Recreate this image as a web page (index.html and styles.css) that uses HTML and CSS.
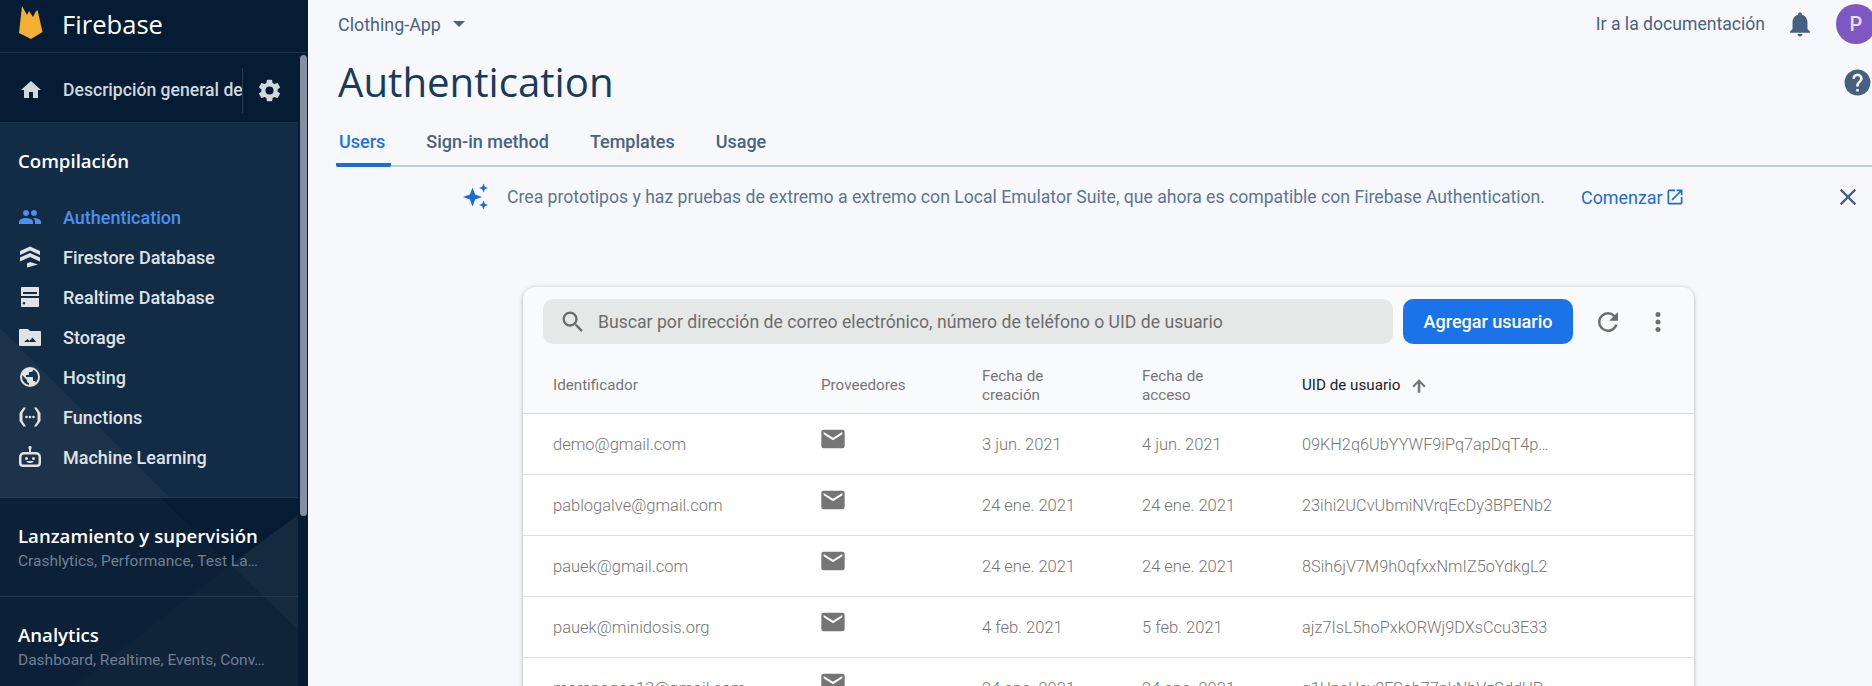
FILE: index.html
```html
<!doctype html>
<html lang="es">
<head>
<meta charset="utf-8">
<title>Authentication - Firebase</title>
<link rel="stylesheet" href="styles.css">
</head>
<body>
<div class="app">
	<aside class="nav">
		<svg class="nav-bg" width="308" height="686" viewBox="0 0 308 686">
			<rect x="0" y="123" width="298" height="374" fill="#132c45"/>
			<polygon points="0,328 169,497 0,497" fill="#1c3349"/>
			<rect x="0" y="497" width="298" height="189" fill="#0c2137"/>
			<polygon points="160,497 298,497 298,515 230,565" fill="#051c34"/>
			<polygon points="298,515 230,565 298,630" fill="#15293f"/>
			<polygon points="230,565 75,686 298,686 298,630" fill="#0f2439"/>
		</svg>
		<div class="brand">
			<svg class="brand-logo" width="24" height="34" viewBox="0 0 24 34"><path d="M0 27 L3 0 L8 9 L10 5 L14 11 L16.500 6 L18.500 4 L23.500 26 L12 33 Z" fill="#f3ae33"/></svg>
			<span class="brand-name">Firebase</span>
		</div>
		<div class="overview">
			<svg class="ico" viewBox="0 0 24 24"><path d="M10 20v-6h4v6h5v-8h3L12 3 2 12h3v8z"/></svg>
			<span class="overview-text">Descripción general de</span>
			<svg class="ico gear" viewBox="0 0 24 24"><path d="M19.14 12.94c.04-.3.06-.61.06-.94 0-.32-.02-.64-.07-.94l2.03-1.58a.49.49 0 0 0 .12-.61l-1.92-3.32a.49.49 0 0 0-.59-.22l-2.39.96c-.5-.38-1.03-.7-1.62-.94l-.36-2.54a.48.48 0 0 0-.48-.41h-3.84c-.24 0-.43.17-.47.41l-.36 2.54c-.59.24-1.13.57-1.62.94l-2.39-.96a.49.49 0 0 0-.59.22L2.74 8.87c-.12.21-.08.47.12.61l2.03 1.58c-.05.3-.09.63-.09.94s.02.64.07.94l-2.03 1.58a.49.49 0 0 0-.12.61l1.92 3.32c.12.22.37.29.59.22l2.39-.96c.5.38 1.03.7 1.62.94l.36 2.54c.05.24.24.41.48.41h3.84c.24 0 .44-.17.47-.41l.36-2.54c.59-.24 1.13-.56 1.62-.94l2.39.96c.22.08.47 0 .59-.22l1.92-3.32c.12-.22.07-.47-.12-.61l-2.01-1.58zM12 15.6A3.6 3.6 0 1 1 12 8.4a3.6 3.6 0 0 1 0 7.2z"/></svg>
		</div>
		<div class="nav-scroll">
			<section class="nav-group open">
				<h3 class="group-title">Compilación</h3>
				<a class="nav-item on">
					<svg class="ico" viewBox="0 0 24 24"><path d="M16 11c1.66 0 2.99-1.34 2.99-3S17.66 5 16 5c-1.66 0-3 1.34-3 3s1.34 3 3 3zm-8 0c1.66 0 2.99-1.34 2.99-3S9.66 5 8 5C6.34 5 5 6.34 5 8s1.34 3 3 3zm0 2c-2.33 0-7 1.17-7 3.5V19h14v-2.5c0-2.33-4.67-3.5-7-3.5zm8 0c-.29 0-.62.02-.97.05 1.16.84 1.97 1.97 1.97 3.45V19h6v-2.5c0-2.33-4.67-3.5-7-3.5z"/></svg>
					Authentication
				</a>
				<a class="nav-item">
					<svg class="ico" viewBox="0 0 24 24"><path d="M12 1.500 22 6V10L12 5.500 2 10V6zM12 8 22 12.500V16.500L12 12 2 16.500V12.500zM9 22.500V18.500L12 17 20 19.500z"/></svg>
					Firestore Database
				</a>
				<a class="nav-item">
					<svg class="ico" viewBox="0 0 24 24"><path d="M4 2h16a1 1 0 0 1 1 1v8H3V3a1 1 0 0 1 1-1zm1 5v2h14V7zM3 13h18v8a1 1 0 0 1-1 1H4a1 1 0 0 1-1-1zm3 4a1.300 1.300 0 1 0 0 2.600A1.300 1.300 0 0 0 6 17z" fill-rule="evenodd"/></svg>
					Realtime Database
				</a>
				<a class="nav-item">
					<svg class="ico" viewBox="0 0 24 24"><path d="M2 4h8l2 2h10a1 1 0 0 1 1 1v13a1 1 0 0 1-1 1H2a1 1 0 0 1-1-1V5a1 1 0 0 1 1-1zm4 13h12l-3.500-4.500-3 3.500-2-2z" fill-rule="evenodd"/></svg>
					Storage
				</a>
				<a class="nav-item">
					<svg class="ico" viewBox="0 0 24 24"><path d="M12 2a10 10 0 1 0 0 20 10 10 0 0 0 0-20zM4 12c0-.6.1-1.200.2-1.800L9 15v1c0 1.100.9 2 2 2v1.900A8 8 0 0 1 4 12zm13.900 5.400c-.3-.8-1-1.400-1.900-1.400h-1v-3c0-.6-.4-1-1-1H8v-2h2c.6 0 1-.4 1-1V7h2c1.100 0 2-.9 2-2v-.4a8 8 0 0 1 2.900 12.800z" fill-rule="evenodd"/></svg>
					Hosting
				</a>
				<a class="nav-item">
					<svg class="ico" viewBox="0 0 24 24"><path d="M8 2.500H5.500L1.500 8v8l4 5.500H8l-3.500-5.500V8zM16 2.500h2.500L22.500 8v8l-4 5.500H16l3.500-5.500V8z"/><circle cx="8.500" cy="12" r="1.300"/><circle cx="12" cy="12" r="1.300"/><circle cx="15.500" cy="12" r="1.300"/></svg>
					Functions
				</a>
				<a class="nav-item">
					<svg class="ico" viewBox="0 0 24 24"><path fill-rule="evenodd" d="M12 1a1.700 1.700 0 0 0-1 3.100V7H6a5 5 0 0 0-5 5v6a4 4 0 0 0 4 4h14a4 4 0 0 0 4-4v-6a5 5 0 0 0-5-5h-5V4.100A1.700 1.700 0 0 0 12 1zM6 9.500h12a2.500 2.500 0 0 1 2.500 2.500v6a1.500 1.500 0 0 1-1.500 1.500H5A1.500 1.500 0 0 1 3.500 18v-6A2.500 2.500 0 0 1 6 9.500z"/><circle cx="8.500" cy="13.500" r="1.500"/><circle cx="15.500" cy="13.500" r="1.500"/><path d="M8.500 16h7c0 1.200-1.500 2-3.500 2s-3.500-.8-3.500-2z"/></svg>
					Machine Learning
				</a>
			</section>
			<section class="nav-group closed">
				<h3 class="group-title">Lanzamiento y supervisión</h3>
				<p class="group-sub">Crashlytics, Performance, Test La…</p>
			</section>
			<section class="nav-group closed">
				<h3 class="group-title">Analytics</h3>
				<p class="group-sub">Dashboard, Realtime, Events, Conv…</p>
			</section>
			<div class="scrollbar"></div>
		</div>
	</aside>

	<main class="main">
		<header class="topbar">
			<div class="project">Clothing-App <span class="caret"></span></div>
			<div class="top-right">
				<a class="docs">Ir a la documentación</a>
				<svg class="bell" viewBox="0 0 24 24"><path d="M12 22c1.100 0 2-.9 2-2h-4c0 1.100.9 2 2 2zm6-6v-5c0-3.070-1.630-5.640-4.500-6.320V4a1.500 1.500 0 0 0-3 0v.68C7.640 5.360 6 7.920 6 11v5l-2 2v1h16v-1z"/></svg>
				<span class="avatar">P</span>
			</div>
		</header>
		<div class="title-row">
			<h1 class="title">Authentication</h1>
			<svg class="help" viewBox="0 0 24 24"><path d="M12 2a10 10 0 1 0 0 20 10 10 0 0 0 0-20zm1 17h-2v-2h2zm2.070-7.750-.9.920C13.450 12.900 13 13.500 13 15h-2v-.5c0-1.100.45-2.100 1.170-2.830l1.240-1.260A2 2 0 1 0 10 9H8a4 4 0 1 1 8 0c0 .88-.36 1.680-.93 2.250z"/></svg>
		</div>
		<nav class="tabs">
			<a class="tab on">Users</a>
			<a class="tab">Sign-in method</a>
			<a class="tab">Templates</a>
			<a class="tab">Usage</a>
		</nav>
		<div class="promo">
			<svg class="sparkle" width="28" height="28" viewBox="0 0 28 28"><path d="M10.500 4.500l2.600 6.900 6.900 2.600-6.900 2.600-2.600 6.900-2.600-6.900L1 14l6.900-2.600zM21.500 0.500l1.300 3.200 3.200 1.300-3.200 1.300-1.300 3.200-1.300-3.200L17 5l3.200-1.300zM21.500 17.500l1.300 3.200 3.200 1.300-3.200 1.300-1.300 3.200-1.300-3.200L17 22l3.200-1.300z"/></svg>
			<span class="promo-text">Crea prototipos y haz pruebas de extremo a extremo con Local Emulator Suite, que ahora es compatible con Firebase Authentication.</span>
			<a class="promo-link">Comenzar
				<svg width="20" height="20" viewBox="0 0 24 24"><path d="M19 19H5V5h7V3H5a2 2 0 0 0-2 2v14a2 2 0 0 0 2 2h14a2 2 0 0 0 2-2v-7h-2zM14 3v2h3.590l-9.830 9.830 1.410 1.410L19 6.410V10h2V3z"/></svg>
			</a>
			<svg class="promo-close" width="28" height="28" viewBox="0 0 24 24"><path d="M19 6.410 17.590 5 12 10.590 6.410 5 5 6.410 10.590 12 5 17.590 6.410 19 12 13.410 17.590 19 19 17.590 13.410 12z"/></svg>
		</div>

		<div class="card">
			<div class="toolbar">
				<div class="search">
					<svg width="28" height="28" viewBox="0 0 24 24"><path d="M15.500 14h-.79l-.28-.27A6.470 6.470 0 0 0 16 9.500 6.500 6.500 0 1 0 9.500 16c1.610 0 3.090-.59 4.230-1.570l.27.28v.79l5 4.990L20.490 19zm-6 0a4.500 4.500 0 1 1 0-9 4.500 4.500 0 0 1 0 9z"/></svg>
					<span>Buscar por dirección de correo electrónico, número de teléfono o UID de usuario</span>
				</div>
				<a class="btn">Agregar usuario</a>
				<svg class="tool" viewBox="0 0 24 24"><path d="M17.650 6.350A7.960 7.960 0 0 0 12 4a8 8 0 1 0 7.730 10h-2.080A6 6 0 1 1 12 6c1.660 0 3.140.69 4.220 1.780L13 11h7V4z"/></svg>
				<svg class="tool" viewBox="0 0 24 24"><path d="M12 8a2 2 0 1 0 0-4 2 2 0 0 0 0 4zm0 2a2 2 0 1 0 0 4 2 2 0 0 0 0-4zm0 6a2 2 0 1 0 0 4 2 2 0 0 0 0-4z"/></svg>
			</div>
			<div class="row head">
				<div class="c1">Identificador</div>
				<div class="c2">Proveedores</div>
				<div class="c3">Fecha de<br>creación</div>
				<div class="c4">Fecha de<br>acceso</div>
				<div class="c5 sorted">UID de usuario
					<svg width="20" height="20" viewBox="0 0 24 24"><path d="M12 4 20 12l-1.800 1.800L13.500 9V20h-3V9L5.800 13.800 4 12z"/></svg>
				</div>
			</div>
			<div class="row">
				<div class="c1">demo@gmail.com</div>
				<div class="c2"><svg class="mail" viewBox="0 0 24 24"><path d="M20 4H4a2 2 0 0 0-2 2v12a2 2 0 0 0 2 2h16a2 2 0 0 0 2-2V6a2 2 0 0 0-2-2zm0 4-8 5-8-5V6l8 5 8-5z"/></svg></div>
				<div class="c3">3 jun. 2021</div>
				<div class="c4">4 jun. 2021</div>
				<div class="c5">09KH2q6UbYYWF9iPq7apDqT4p…</div>
			</div>
			<div class="row">
				<div class="c1">pablogalve@gmail.com</div>
				<div class="c2"><svg class="mail" viewBox="0 0 24 24"><path d="M20 4H4a2 2 0 0 0-2 2v12a2 2 0 0 0 2 2h16a2 2 0 0 0 2-2V6a2 2 0 0 0-2-2zm0 4-8 5-8-5V6l8 5 8-5z"/></svg></div>
				<div class="c3">24 ene. 2021</div>
				<div class="c4">24 ene. 2021</div>
				<div class="c5">23ihi2UCvUbmiNVrqEcDy3BPENb2</div>
			</div>
			<div class="row">
				<div class="c1">pauek@gmail.com</div>
				<div class="c2"><svg class="mail" viewBox="0 0 24 24"><path d="M20 4H4a2 2 0 0 0-2 2v12a2 2 0 0 0 2 2h16a2 2 0 0 0 2-2V6a2 2 0 0 0-2-2zm0 4-8 5-8-5V6l8 5 8-5z"/></svg></div>
				<div class="c3">24 ene. 2021</div>
				<div class="c4">24 ene. 2021</div>
				<div class="c5">8Sih6jV7M9h0qfxxNmIZ5oYdkgL2</div>
			</div>
			<div class="row">
				<div class="c1">pauek@minidosis.org</div>
				<div class="c2"><svg class="mail" viewBox="0 0 24 24"><path d="M20 4H4a2 2 0 0 0-2 2v12a2 2 0 0 0 2 2h16a2 2 0 0 0 2-2V6a2 2 0 0 0-2-2zm0 4-8 5-8-5V6l8 5 8-5z"/></svg></div>
				<div class="c3">4 feb. 2021</div>
				<div class="c4">5 feb. 2021</div>
				<div class="c5">ajz7IsL5hoPxkORWj9DXsCcu3E33</div>
			</div>
			<div class="row">
				<div class="c1">morenogos13@gmail.com</div>
				<div class="c2"><svg class="mail" viewBox="0 0 24 24"><path d="M20 4H4a2 2 0 0 0-2 2v12a2 2 0 0 0 2 2h16a2 2 0 0 0 2-2V6a2 2 0 0 0-2-2zm0 4-8 5-8-5V6l8 5 8-5z"/></svg></div>
				<div class="c3">24 ene. 2021</div>
				<div class="c4">24 ene. 2021</div>
				<div class="c5">g1UpcUcv8FSab77nkNbVzSddUP</div>
			</div>
		</div>
	</main>
</div>
</body>
</html>
```

FILE: styles.css
```css
*{margin:0; padding:0; box-sizing:border-box;}
html,body{height:100%; overflow:hidden;}
body{font-family:Roboto,"Liberation Sans",sans-serif; background:#f6f8fb; color:#455a64;}
.app{display:flex; height:686px; overflow:hidden;}

.nav{width:308px; flex:none; background:#051c34; position:relative; overflow:hidden; display:flex; flex-direction:column;}
.nav-bg{position:absolute; left:0; top:0;}
.brand,.overview,.nav-scroll{position:relative;}
.brand{height:53px; flex:none; display:flex; align-items:center; padding-left:19px; border-bottom:1px solid #1d3147;}
.brand-logo{margin-top:-6px;}
.brand-name{font-family:"Open Sans",Roboto,sans-serif; font-size:25.6px; color:#fff; margin-left:19px; margin-top:-3px;}
.ico{width:24px; height:24px; fill:#cfd8dc; flex:none;}
.overview{height:70px; flex:none; display:flex; align-items:center; padding:5px 0 0 19px; border-bottom:1px solid #1d3147; margin-right:10px; color:#cfd8dc; font-size:17.6px; font-weight:500;}
.overview-text{width:180px; margin-left:20px; white-space:nowrap; overflow:hidden; border-right:1px solid #24384e; height:45px; line-height:45px; flex:none;}
.gear{width:27px; height:27px; margin-left:13px;}
.nav-scroll{flex:1; margin-right:10px;}
.nav-group{border-bottom:1px solid #26394f; padding:25px 0 0 18px;}
.open{height:375px;}
.group-title{font-family:"Open Sans",Roboto,sans-serif; font-size:18.6px; font-weight:600; color:#fff; line-height:26px;}
.open .group-title{margin-bottom:23px;}
.nav-item{display:flex; align-items:center; height:40px; font-size:18px; font-weight:500; color:#dfe3e6; gap:21px;}
.nav-item .ico{fill:#dfe3e6;}
.nav-item.on{color:#4d90f0;}
.nav-item.on .ico{fill:#4d90f0;}
.closed{height:99px;}
.closed:last-of-type{border-bottom:0;}
.group-sub{font-size:15.5px; line-height:22px; margin-top:1px; color:#6f8094; white-space:nowrap;}
.scrollbar{position:absolute; right:-9px; top:-68px; width:7px; height:461px; background:#8290a6; border-radius:4px;}

.main{flex:1; min-width:0; padding-left:30px;}
.topbar{height:48px; display:flex; justify-content:space-between; align-items:center;}
.project{font-size:17.9px; color:#4a6180; display:flex; align-items:center; gap:12px;}
.caret{width:0; height:0; border-left:6px solid transparent; border-right:6px solid transparent; border-top:6px solid #4a6180;}
.top-right{display:flex; align-items:center; margin-right:-4px;}
.docs{font-size:17.6px; color:#4a6180;}
.bell{width:30px; height:30px; fill:#46607f; margin-left:20px;}
.avatar{width:40px; height:40px; border-radius:50%; background:#7e57c2; color:#e8def8; font-size:20px; font-weight:500; display:flex; align-items:center; justify-content:center; margin-left:21px;}
.title-row{height:64px; display:flex; justify-content:space-between; align-items:flex-start;}
.title{font-family:"Open Sans",Roboto,sans-serif; font-size:40.2px; font-weight:400; color:#1a3a5c; line-height:64px; margin-top:2px;}
.help{width:31px; height:31px; fill:#46607f; margin:19px -1px 0 0;}
.tabs{height:55px; display:flex; margin-left:-2px; border-bottom:2px solid #c0cfde;}
.tab{height:55px; padding:0 4px; margin-right:33px; font-size:18px; font-weight:500; color:#4a6180; line-height:60px;}
.tab.on{color:#1a73e8; padding:0 6px 0 3px; margin-right:31px; border-bottom:4px solid #1a6cd8; border-radius:2px;}
.promo{height:60px; display:flex; align-items:center; position:relative; padding-left:124px; font-size:17.64px; color:#5c7592;}
.sparkle{fill:#1a6cd8; flex:none;}
.promo-text{margin-left:17px; white-space:nowrap;}
.promo-link{margin-left:36px; font-size:17.9px; color:#1a6cd8; display:flex; align-items:center; gap:2px;}
.promo-link svg{fill:#1a6cd8;}
.promo-close{fill:#46607f; position:absolute; right:10px; top:16px;}

.card{width:1171px; margin:60px 0 0 185px; background:#f9fafc; border-radius:12px 12px 0 0; box-shadow:0 1px 4px rgba(0,0,0,.3);}
.toolbar{height:71px; padding:12px 0 0 20px; display:flex; align-items:flex-start;}
.search{width:850px; height:45px; background:#e6e7e7; border-radius:10px; display:flex; align-items:center; padding-left:16px; gap:11px; font-size:17.64px; color:#6d6d6d;}
.search svg{fill:#6d6d6d; flex:none;}
.btn{width:170px; height:45px; margin-left:10px; background:#1a73e8; color:#fff; border-radius:10px; font-size:18px; font-weight:500; text-align:center; line-height:45px;}
.tool{width:30px; height:30px; fill:#6d6d6d; margin:8px 0 0 20px;}
.row{display:grid; grid-template-columns:268px 161px 160px 160px 1fr; height:61px; align-items:center; padding-left:30px; background:#fff; border-bottom:1px solid #e0e0e0; font-size:16.5px; color:#757575; font-weight:300; white-space:nowrap;}
.row .c5{font-size:16.3px;}
.row.head{height:56px; background:#f9fafc; font-size:15.2px; font-weight:400; line-height:19px; border-bottom:1px solid #d8d8d8;}
.row.head .c5{font-size:15.2px;}
.sorted{color:#212121; display:flex; align-items:center; gap:9px;}
.sorted svg{fill:#757575;}
.mail{width:28px; height:28px; fill:#757575; display:block; margin:-11px 0 0 -2px;}
```
